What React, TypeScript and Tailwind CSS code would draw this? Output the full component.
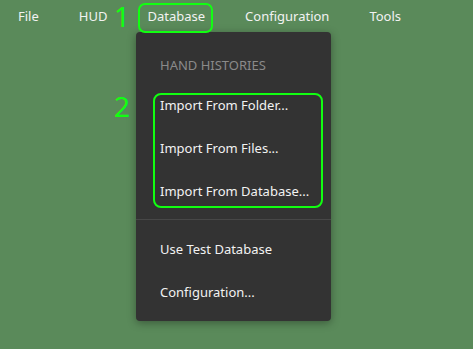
export default function App() {
  const menus = ["File", "HUD", "Database", "Configuration", "Tools"];
  return (
    <div className="relative w-[473px] h-[349px] bg-[#5a8a5a] overflow-hidden font-['Noto_Sans',sans-serif] text-[13px] text-[#f2f2f2]">
      <div className="flex pl-[18px] gap-10 h-8 leading-[32px]">
        {menus.map((m) => (
          <span key={m}>{m}</span>
        ))}
      </div>

      {/* dropdown */}
      <div className="absolute left-[136px] top-8 w-[195px] h-[289px] rounded bg-[#333333] shadow-[0_2px_8px_rgba(0,0,0,0.35)] pt-[15px]">
        <div className="h-[37px] leading-[37px] pl-6 text-[#8a8a8a] uppercase">Hand Histories</div>
        {["Import From Folder...", "Import From Files...", "Import From Database..."].map((t) => (
          <div key={t} className="h-[43px] leading-[43px] pl-6">{t}</div>
        ))}
        <div className="mt-[6px] h-px bg-[#474747]" />
        <div className="mt-2 h-[43px] leading-[43px] pl-6">Use Test Database</div>
        <div className="h-[43px] leading-[43px] pl-6">Configuration...</div>
      </div>

      {/* annotations */}
      <div className="absolute left-[138px] top-[3px] w-[75px] h-[30px] rounded-[7px] border-2 border-[#11ff11]" />
      <div className="absolute left-[114px] top-0 text-[28px] leading-[32px] text-[#11ff11]">1</div>
      <div className="absolute left-[153px] top-[93px] w-[170px] h-[115px] rounded-[8px] border-2 border-[#11ff11]" />
      <div className="absolute left-[114px] top-[86px] text-[28px] leading-[40px] text-[#11ff11]">2</div>
    </div>
  );
}
